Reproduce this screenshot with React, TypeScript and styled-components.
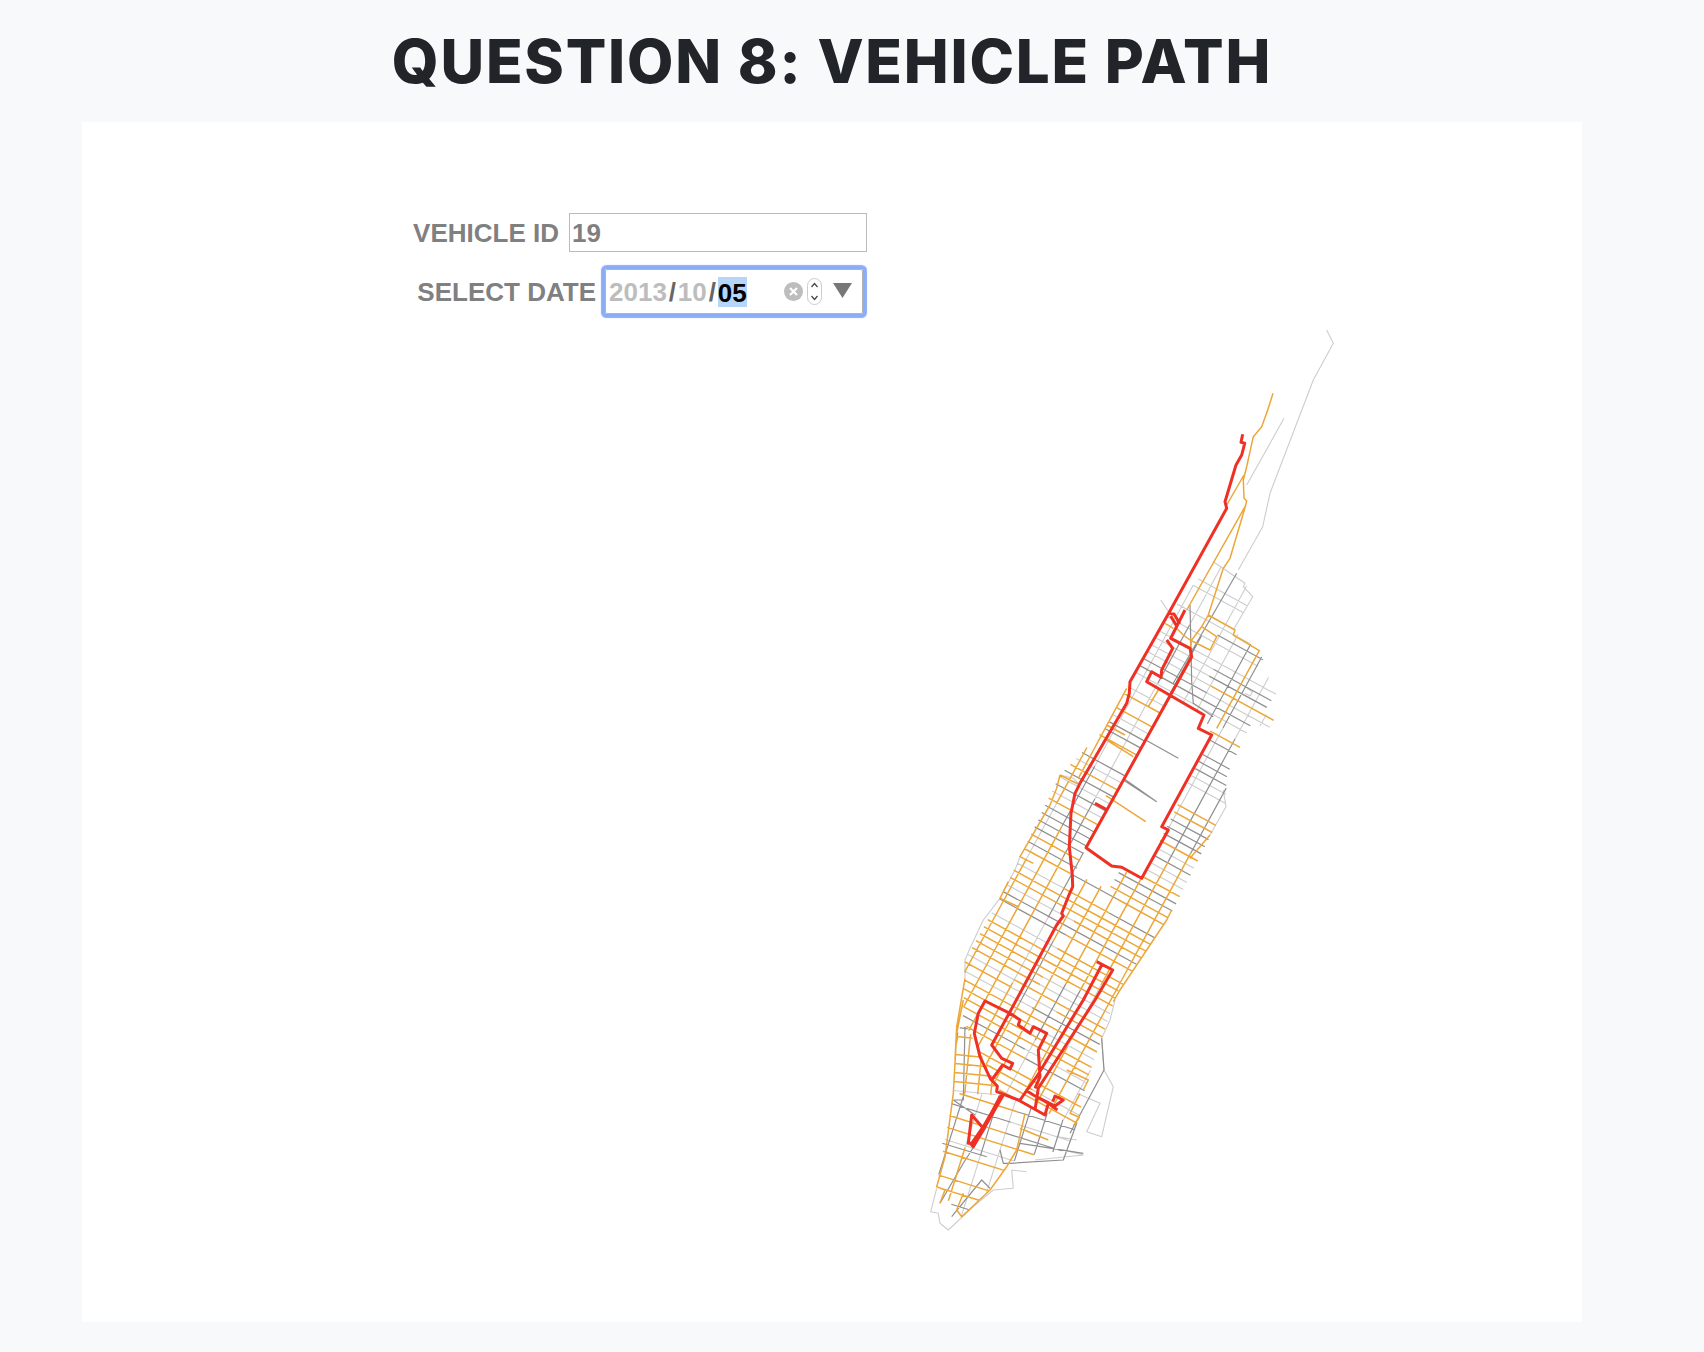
import React from 'react';
import styled, { createGlobalStyle } from 'styled-components';

type Pt = [number, number];
type Seg = [Pt, Pt];
type Crop = [number, number];

// crops the traces were read from, coordinates there are 3x
const Z2: Crop = [900, 320];
const Z3: Crop = [920, 760];
const Z4: Crop = [920, 1000];
const Z5: Crop = [1000, 620];

const at = (crop: Crop, nums: number[]): Pt[] => {
  const out: Pt[] = [];
  for (let i = 0; i < nums.length; i += 2) {
    out.push([crop[0] + nums[i] / 3, crop[1] + nums[i + 1] / 3]);
  }
  return out;
};

const toPath = (pts: Pt[]) =>
  'M' + pts.map((p) => `${p[0].toFixed(1)} ${p[1].toFixed(1)}`).join('L');

const noise = (a: number, b: number) => {
  const s = Math.sin(a * 12.9898 + b * 78.233) * 43758.5453;
  return s - Math.floor(s);
};

const inside = (p: Pt, poly: Pt[]) => {
  let hit = false;
  for (let i = 0, j = poly.length - 1; i < poly.length; j = i++) {
    const [xi, yi] = poly[i];
    const [xj, yj] = poly[j];
    if (yi > p[1] !== yj > p[1] && p[0] < ((xj - xi) * (p[1] - yi)) / (yj - yi) + xi) hit = !hit;
  }
  return hit;
};

const cuts = (a: Pt, b: Pt, poly: Pt[]) => {
  const ts: number[] = [];
  for (let i = 0, j = poly.length - 1; i < poly.length; j = i++) {
    const [x1, y1] = poly[j];
    const [x2, y2] = poly[i];
    const d = (b[0] - a[0]) * (y2 - y1) - (b[1] - a[1]) * (x2 - x1);
    if (Math.abs(d) < 1e-9) continue;
    const t = ((x1 - a[0]) * (y2 - y1) - (y1 - a[1]) * (x2 - x1)) / d;
    const s = ((x1 - a[0]) * (b[1] - a[1]) - (y1 - a[1]) * (b[0] - a[0])) / d;
    if (t > 0 && t < 1 && s >= 0 && s <= 1) ts.push(t);
  }
  return ts;
};

const mix = (a: Pt, b: Pt, t: number): Pt => [a[0] + (b[0] - a[0]) * t, a[1] + (b[1] - a[1]) * t];

const clip = (a: Pt, b: Pt, poly: Pt[], holes: Pt[][]): Seg[] => {
  const ts = [0, 1, ...cuts(a, b, poly), ...holes.flatMap((h) => cuts(a, b, h))].sort((x, y) => x - y);
  const out: Seg[] = [];
  for (let i = 0; i < ts.length - 1; i++) {
    const mid = mix(a, b, (ts[i] + ts[i + 1]) / 2);
    if (inside(mid, poly) && !holes.some((h) => inside(mid, h))) {
      out.push([mix(a, b, ts[i]), mix(a, b, ts[i + 1])]);
    }
  }
  return out;
};

type Shade = 'light' | 'gray' | 'orange' | 'none';
type Layers = Record<Shade, string[]>;

const chunk = (seg: Seg, size: number): Seg[] => {
  const len = Math.hypot(seg[1][0] - seg[0][0], seg[1][1] - seg[0][1]);
  const n = Math.max(1, Math.round(len / size));
  const out: Seg[] = [];
  for (let i = 0; i < n; i++) out.push([mix(seg[0], seg[1], i / n), mix(seg[0], seg[1], (i + 1) / n)]);
  return out;
};

const shadeAt = (p: Pt, r: number): Shade => {
  // the far north is only sparse pale streets
  if (p[1] < 640) return r < 0.45 ? 'none' : r < 0.55 ? 'gray' : 'light';
  const orange = p[1] < 700 ? 0.02 : p[1] < 880 ? 0.3 : 0.66;
  const gray = p[1] < 700 ? 0.22 : p[1] < 880 ? 0.36 : 0.18;
  if (r < orange) return 'orange';
  return r < orange + gray ? 'gray' : 'light';
};

const addGrid = (
  layers: Layers,
  o: Pt,
  dir: Pt,
  vRange: [number, number, number],
  uRange: [number, number, number],
  poly: Pt[],
  holes: Pt[][],
  pick: (p: Pt, r: number) => Shade,
) => {
  const side: Pt = [-dir[1], dir[0]];
  const point = (u: number, v: number): Pt => [o[0] + dir[0] * u + side[0] * v, o[1] + dir[1] * u + side[1] * v];
  let k = 0;
  for (let v = vRange[0]; v <= vRange[1]; v += vRange[2]) {
    k++;
    clip(point(-900, v), point(900, v), poly, holes).forEach((seg, a) =>
      chunk(seg, 70).forEach((part, b) => {
        const mid = mix(part[0], part[1], 0.5);
        layers[pick(mid, noise(k + a * 3, b + 1))].push(toPath(part));
      }),
    );
  }
  k = 0;
  for (let u = uRange[0]; u <= uRange[1]; u += uRange[2]) {
    k++;
    if (noise(k, 7) < 0.08) continue;
    clip(point(u, -700), point(u, 700), poly, holes).forEach((seg, a) =>
      chunk(seg, 62).forEach((part, b) => {
        const mid = mix(part[0], part[1], 0.5);
        layers[pick(mid, noise(k * 1.7 + a, b + 31))].push(toPath(part));
      }),
    );
  }
};

const ISLAND: Pt[] = [
  [1172, 610], [1213, 562], [1245, 583], [1253, 597], [1233, 630], [1259, 651], [1263, 660], [1255, 670],
  [1282, 685], [1263, 713], [1275, 718], [1268, 730], [1252, 722], [1227, 775], [1225, 807], [1173, 910],
  [1117, 993], [1102, 1038], [1087, 1080], [1077, 1125], [1002, 1095], [963, 1020], [965, 960], [1000, 898],
  [1020, 857], [1060, 775], [1107, 727], [1128, 685],
];
const PARK = at(Z5, [258, 683, 510, 225, 612, 285, 635, 345, 425, 775, 335, 738]);
const SOUTH_OF_PARK = at(Z3, [497, 262, 465, 340, 565, 390, 605, 322, 575, 320]);
const DOWNTOWN = at(Z4, [100, 280, 245, 285, 470, 375, 440, 450, 300, 470, 260, 500, 210, 570, 125, 650, 50, 560]);
const VILLAGE = at(Z4, [130, 60, 245, 285, 100, 280, 112, 100]);

const buildLayers = (): Layers => {
  const layers: Layers = { light: [], gray: [], orange: [], none: [] };
  addGrid(layers, [1086, 848], [0.478, -0.878], [-157.5, 236, 15.75], [-270, 330, 8], ISLAND, [PARK, SOUTH_OF_PARK], shadeAt);
  addGrid(layers, [1000, 1100], [0.3, -0.954], [-70, 130, 17], [-150, 60, 12], DOWNTOWN, [], (_, r) =>
    r < 0.38 ? 'orange' : r < 0.72 ? 'gray' : 'light',
  );
  addGrid(layers, [960, 1060], [0.1, -0.995], [-5, 80, 13], [-40, 50, 9], VILLAGE, [], (_, r) =>
    r < 0.62 ? 'orange' : r < 0.85 ? 'gray' : 'light',
  );
  return layers;
};

const LIGHT_TRACES: Pt[][] = [
  at(Z2, [1280, 30, 1300, 70, 1240, 180, 1110, 520, 1088, 620, 1015, 750]),
  at(Z2, [1152, 295, 1040, 495]),
  at(Z2, [940, 725, 1035, 790, 1030, 800, 1058, 830, 1000, 930]),
  at(Z2, [782, 840, 806, 875]),
  at(Z2, [1040, 1105, 1058, 1115, 1050, 1128, 1035, 1120]),
  at(Z3, [420, 45, 460, 55, 480, 75]),
  at(Z3, [910, 90, 918, 140, 870, 225]),
  at(Z3, [240, 415, 190, 480, 150, 565, 135, 600, 135, 655]),
  at(Z3, [300, 290, 285, 330, 250, 395]),
  at(Z4, [585, 0, 570, 60, 545, 115, 552, 210, 580, 260, 545, 410, 500, 395, 540, 310, 470, 280]),
  at(Z4, [345, 480, 490, 465, 430, 450]),
  at(Z4, [320, 515, 275, 510, 280, 565, 220, 570, 160, 620, 85, 690, 60, 670, 55, 640, 32, 635, 50, 565]),
  at(Z4, [420, 380, 415, 410, 470, 420]),
];

const GRAY_TRACES: Pt[][] = [
  at(Z2, [1010, 760, 820, 1090]),
  at(Z2, [870, 855, 875, 1085, 880, 1150, 940, 1190]),
  at(Z5, [437, 360, 535, 415]),
  at(Z5, [370, 480, 470, 545]),
  at(Z3, [610, 55, 710, 125]),
  at(Z4, [100, 300, 165, 345]),
  at(Z4, [67, 430, 200, 470]),
  at(Z4, [300, 430, 490, 460]),
  at(Z4, [60, 610, 130, 490, 200, 380]),
  at(Z4, [240, 450, 250, 490, 270, 490, 430, 480, 470, 370]),
  at(Z4, [545, 115, 552, 210, 520, 270, 450, 400]),
  at(Z4, [95, 650, 185, 540, 210, 565]),
  at(Z4, [135, 80, 130, 300, 100, 300]),
];

const ORANGE_TRACES: Pt[][] = [
  at(Z2, [1119, 220, 1105, 265, 1085, 320, 1060, 350, 1040, 440, 1030, 480, 1032, 535, 1040, 543, 1033, 570, 990, 715, 970, 745, 925, 885, 905, 920, 875, 960, 870, 985]),
  at(Z2, [1032, 465, 980, 555]),
  at(Z2, [1035, 560, 860, 870]),
  at(Z2, [830, 925, 850, 945, 870, 960]),
  at(Z2, [925, 885, 1005, 930, 1000, 945, 1078, 992, 950, 1225]),
  at(Z2, [905, 920, 950, 950, 930, 990, 870, 960]),
  at(Z2, [795, 910, 820, 925]),
  at(Z2, [680, 1105, 535, 1375]),
  at(Z2, [690, 1130, 745, 1160, 775, 1110]),
  at(Z2, [620, 1215, 675, 1245]),
  at(Z2, [620, 1260, 700, 1310]),
  at(Z5, [318, 527, 437, 605]),
  at(Z3, [420, 45, 410, 85, 390, 135, 300, 290, 340, 310]),
  at(Z3, [265, 365, 240, 415, 295, 440]),
  at(Z3, [135, 655, 110, 800, 105, 900]),
  at(Z3, [420, 45, 480, 75]),
  at(Z3, [755, 450, 740, 480, 600, 690, 580, 725]),
  at(Z3, [870, 225, 810, 295]),
  at(Z4, [130, 0, 110, 100, 100, 280, 75, 470, 50, 560, 75, 570, 60, 610]),
  at(Z4, [315, 340, 290, 450, 260, 500, 210, 570, 125, 650, 110, 630, 130, 580]),
  at(Z4, [440, 210, 505, 240, 490, 270]),
  at(Z4, [480, 280, 450, 340, 478, 352, 460, 378]),
  at(Z4, [385, 420, 300, 385]),
];

const RED_TRACES: Pt[][] = [
  [
    ...at(Z2, [1028, 343, 1023, 367, 1034, 370, 1025, 405, 1008, 435, 975, 545, 980, 565, 806, 880, 690, 1085, 688, 1120, 680, 1150]),
    ...at(Z5, [240, 490, 225, 520, 213, 580, 208, 680, 217, 765]),
    ...at(Z3, [458, 380, 445, 410, 425, 460, 430, 468, 410, 495, 270, 755, 215, 855]),
    ...at(Z4, [245, 175, 278, 190, 270, 207, 248, 195, 215, 240]),
  ],
  at(Z2, [806, 880, 822, 882, 838, 908, 828, 915, 812, 888]),
  [
    ...at(Z2, [855, 870, 812, 955, 870, 985, 875, 1010]),
    ...at(Z5, [258, 683, 335, 738, 365, 742, 425, 775, 505, 630, 485, 620, 635, 345, 595, 325, 612, 285, 440, 185, 455, 155, 483, 172, 485, 150, 518, 85, 500, 60]),
  ],
  at(Z5, [285, 550, 318, 568]),
  [...at(Z3, [530, 605, 578, 630]), ...at(Z4, [525, 0, 355, 265, 345, 330])],
  [...at(Z3, [545, 615]), ...at(Z4, [490, 0, 350, 230, 300, 300])],
  at(Z4, [270, 40, 195, 3, 175, 40, 163, 100, 180, 170, 212, 238, 232, 258, 230, 275, 295, 300, 375, 345, 385, 310, 340, 285, 320, 272]),
  at(Z4, [270, 40, 300, 60, 295, 75, 330, 100, 340, 80, 380, 100, 355, 150, 360, 230, 345, 265]),
  at(Z4, [340, 285, 405, 318, 430, 300, 405, 288, 398, 305]),
  at(Z4, [385, 310, 412, 330]),
  at(Z4, [245, 285, 190, 380, 155, 430, 145, 430, 155, 345, 190, 385, 240, 290]),
  at(Z4, [150, 430, 160, 440, 250, 285]),
];

const layers = buildLayers();
const tracePaths = (traces: Pt[][]) => traces.map(toPath).join('');

const VehicleMap: React.FC = () => (
  <MapSvg viewBox="900 320 460 920" fill="none" strokeLinejoin="round">
    <path d={layers.light.join('') + tracePaths(LIGHT_TRACES)} stroke="#cdcdcd" strokeWidth="1.1" />
    <path d={layers.gray.join('') + tracePaths(GRAY_TRACES)} stroke="#8f8f8f" strokeWidth="1.2" />
    <path d={layers.orange.join('') + tracePaths(ORANGE_TRACES)} stroke="#eca738" strokeWidth="1.5" />
    <path d={tracePaths(RED_TRACES)} stroke="#ee3124" strokeWidth="3" />
  </MapSvg>
);

const App: React.FC = () => (
  <>
    <GlobalStyle />
    <Page>
      <Title>QUESTION 8: VEHICLE PATH</Title>
      <Card>
        <Form>
          <Row>
            <Label htmlFor="vehicle">VEHICLE ID</Label>
            <TextInput id="vehicle" type="text" value="19" readOnly />
          </Row>
          <Row>
            <Label as="span">SELECT DATE</Label>
            <DateBox>
              <DatePart $dim>2013</DatePart>
              <Slash>/</Slash>
              <DatePart $dim>10</DatePart>
              <Slash>/</Slash>
              <Selected>05</Selected>
              <DateControls>
                <svg width="19" height="19" viewBox="0 0 19 19">
                  <circle cx="9.5" cy="9.5" r="9.5" fill="#bdbdbd" />
                  <path d="M6 6l7 7M13 6l-7 7" stroke="#fff" strokeWidth="2.2" fill="none" />
                </svg>
                <Spinner>
                  <svg width="9" height="21" viewBox="0 0 9 21" fill="none" stroke="#444" strokeWidth="1.2">
                    <path d="M1.5 6L4.5 2.5 7.5 6" />
                    <path d="M1.5 15l3 3.5 3-3.5" />
                  </svg>
                </Spinner>
                <svg width="19" height="15" viewBox="0 0 19 15">
                  <path d="M0 0h19L9.5 15z" fill="#777" />
                </svg>
              </DateControls>
            </DateBox>
          </Row>
        </Form>
        <VehicleMap />
      </Card>
    </Page>
  </>
);

const GlobalStyle = createGlobalStyle`
  html, body {
    margin: 0;
    padding: 0;
    background: #f8f9fa;
  }
`;

const Page = styled.div`
  width: 1500px;
  margin-left: 82px;
  padding-bottom: 30px;
`;

const Title = styled.h1`
  margin: 0;
  height: 122px;
  display: flex;
  align-items: center;
  justify-content: center;
  font-family: Inter, 'Liberation Sans', sans-serif;
  font-size: 60px;
  font-weight: 800;
  letter-spacing: 1.8px;
  color: #212529;
`;

const Card = styled.div`
  height: 1200px;
  padding-top: 91px;
  box-sizing: border-box;
  background: #fff;
`;

const Form = styled.div`
  width: 785px;
  display: flex;
  flex-direction: column;
  gap: 17px;
  font-family: 'Liberation Sans', Arial, sans-serif;
`;

const Row = styled.div`
  display: flex;
  justify-content: flex-end;
  align-items: center;
  gap: 10px;
`;

const Label = styled.label`
  padding-top: 1px;
  font-size: 26px;
  font-weight: 700;
  color: #808080;
`;

const TextInput = styled.input`
  width: 298px;
  height: 39px;
  box-sizing: border-box;
  padding: 1px 2px 0;
  border: 1px solid #bbb;
  outline: none;
  font-family: inherit;
  font-size: 26px;
  font-weight: 700;
  color: #808080;
`;

const DateBox = styled.div`
  width: 258px;
  height: 45px;
  box-sizing: border-box;
  margin-right: 4px;
  margin-left: -1px;
  padding: 0 10px 0 3px;
  display: flex;
  align-items: center;
  border: 1px solid #b4b4b4;
  border-radius: 2px;
  box-shadow: 0 0 1px 4px #8aadf6;
  font-size: 26px;
  font-weight: 700;
  color: #666;
`;

const DatePart = styled.span<{ $dim?: boolean }>`
  padding-top: 2px;
  color: ${({ $dim }) => ($dim ? '#bdbdbd' : '#666')};
`;

const Slash = styled.span`
  padding-top: 2px;
  margin: 0 1.9px;
  color: #666;
`;

const Selected = styled.span`
  padding-top: 2px;
  background: #b5d5fb;
  color: #000;
  line-height: 28px;
`;

const DateControls = styled.div`
  margin-left: auto;
  display: flex;
  align-items: center;
  gap: 4px;
  & > svg:last-child {
    margin-left: 7px;
    margin-top: -3px;
  }
`;

const Spinner = styled.div`
  width: 15px;
  height: 27px;
  box-sizing: border-box;
  display: flex;
  align-items: center;
  justify-content: center;
  border: 1px solid #ccc;
  border-radius: 8px;
`;

const MapSvg = styled.svg`
  display: block;
  width: 460px;
  height: 920px;
  margin: 6px 0 0 818px;
`;

export default App;
